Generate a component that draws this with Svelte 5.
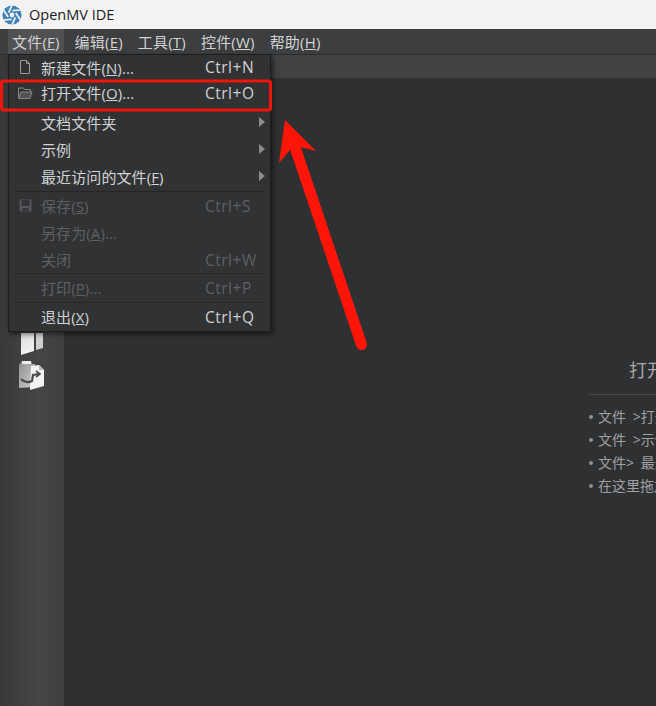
<script>
  const menubar = [
    { label: '文件', key: 'F', active: true },
    { label: '编辑', key: 'E' },
    { label: '工具', key: 'T' },
    { label: '控件', key: 'W' },
    { label: '帮助', key: 'H' }
  ];
  const groups = [
    [
      { label: '新建文件', key: 'N', dots: true, shortcut: 'Ctrl+N', icon: 'new', compact: true },
      { label: '打开文件', key: 'O', dots: true, shortcut: 'Ctrl+O', icon: 'open', spaced: true },
      { label: '文档文件夹', sub: true },
      { label: '示例', sub: true },
      { label: '最近访问的文件', key: 'F', sub: true }
    ],
    [
      { label: '保存', key: 'S', shortcut: 'Ctrl+S', icon: 'save', off: true },
      { label: '另存为', key: 'A', dots: true, off: true },
      { label: '关闭', shortcut: 'Ctrl+W', off: true }
    ],
    [{ label: '打印', key: 'P', dots: true, shortcut: 'Ctrl+P', off: true }],
    [{ label: '退出', key: 'X', shortcut: 'Ctrl+Q' }]
  ];
  const tips = ['文件 >打开文件', '文件 >示例', '文件> 最近访问的文件', '在这里拖放文件'];
</script>

<div class="window">
  <header class="titlebar">
    <svg class="logo" viewBox="0 0 20 20" width="20" height="20">
      <circle cx="10" cy="10" r="9.6" fill="#3f82b8" />
      <g fill="none" stroke="#f3f3f3" stroke-width="1.7">
        <path d="M10 .2 L6.6 7.6" />
        <path d="M18.6 5 L10.4 5.6" />
        <path d="M18.6 15 L13.8 8" />
        <path d="M10 19.8 L13.4 12.4" />
        <path d="M1.4 15 L9.6 14.4" />
        <path d="M1.4 5 L6.2 12" />
      </g>
      <circle cx="10" cy="10" r="2.4" fill="#f3f3f3" />
    </svg>
    <span class="title">OpenMV IDE</span>
  </header>

  <nav class="menubar">
    {#each menubar as m}
      <span class="top" class:active={m.active}>{m.label}(<u>{m.key}</u>)</span>
    {/each}
  </nav>

  <div class="body">
    <aside class="sidebar">
      <svg class="side-icon" viewBox="0 0 26 24" width="26" height="24">
        <defs>
          <linearGradient id="pg" x1="0" y1="0" x2="0.3" y2="1">
            <stop offset="0" stop-color="#d8d8d8" />
            <stop offset="1" stop-color="#f4f4f4" />
          </linearGradient>
          <linearGradient id="fold" x1="0" y1="0" x2="1" y2="1">
            <stop offset="0" stop-color="#8f8f8f" />
            <stop offset="1" stop-color="#d0d0d0" />
          </linearGradient>
        </defs>
        <polygon points="2,2 15,2 15,20 2,24" fill="url(#pg)" />
        <polygon points="17,2 24,2 24,17 17,19" fill="#cfcfcf" />
      </svg>
      <svg class="side-icon" viewBox="0 0 28 31" width="28" height="31">
        <polygon points="1,5 4,1 13,1 14,4 17,4 17,27 1,28" fill="url(#fold)" />
        <polygon points="4,1 13,1 13,4 4,4" fill="#efefef" />
        <polygon points="13,6 21,5 26,10 26,26 12,30" fill="#f4f4f4" />
        <polygon points="21,5 26,10 21,10" fill="#b5b5b5" />
        <path d="M3 19 Q8 24 14 21 L15 15 L21 14" fill="none" stroke="#4a4a4a" stroke-width="2.2" />
        <path d="M18 11 L22 14 L18 17" fill="none" stroke="#4a4a4a" stroke-width="1.6" />
      </svg>
    </aside>

    <main class="main">
      <div class="toolbar"></div>
      <section class="welcome">
        <h2>打开文件</h2>
        <ul>
          {#each tips as t}
            <li>{t}</li>
          {/each}
        </ul>
      </section>
    </main>
  </div>

  <div class="menu">
    {#each groups as g, gi}
      {#if gi > 0}<div class="sep s{gi}"></div>{/if}
      {#each g as item}
        <div class="item" class:off={item.off} class:compact={item.compact} class:spaced={item.spaced}>
          <span class="icon">
            {#if item.icon === 'new'}
              <svg viewBox="0 0 12 14" width="12" height="14">
                <path d="M1.5 .5 H7.5 L10.5 3.5 V13.5 H1.5 Z M7.5 .5 V3.5 H10.5" fill="none" stroke="#9a9b9c" />
              </svg>
            {:else if item.icon === 'open'}
              <svg viewBox="0 0 15 12" width="15" height="12">
                <path d="M.5 11 V1 H5.5 L6.5 2.5 H12.5 V4.5" fill="none" stroke="#87888a" />
                <path d="M.7 11.5 L2.8 5 H14 L12 11.5 Z" fill="#515254" stroke="#87888a" />
              </svg>
            {:else if item.icon === 'save'}
              <svg viewBox="0 0 13 13" width="13" height="13">
                <path d="M.5 .5 H12.5 V12.5 H.5 Z" fill="#56575a" />
                <rect x="2.5" y="1" width="8" height="6" fill="#34353a" />
                <rect x="3.5" y="9" width="6" height="3.5" fill="#34353a" />
              </svg>
            {/if}
          </span>
          <span class="text">
            {item.label}{#if item.key}(<u>{item.key}</u>){/if}{#if item.dots}...{/if}
          </span>
          {#if item.shortcut}<span class="shortcut">{item.shortcut}</span>{/if}
          {#if item.sub}<span class="arrow"></span>{/if}
        </div>
      {/each}
    {/each}
  </div>

  <svg class="annotation" viewBox="0 0 656 706" width="656" height="706">
    <rect x="1.5" y="81" width="269" height="29" rx="2" fill="none" stroke="#f0140a" stroke-width="3" />
    <line x1="296" y1="150" x2="361.5" y2="344.5" stroke="#ff1408" stroke-width="11" stroke-linecap="round" />
    <polygon points="285,120 316,151 300,147 290,150 279,163" fill="#ff1408" />
  </svg>
</div>

<style>
  :global(body) {
    margin: 0;
    background: #2f3032;
  }
  .window {
    position: relative;
    display: flex;
    flex-direction: column;
    width: 656px;
    height: 706px;
    overflow: hidden;
    font-family: "Open Sans", "Noto Sans CJK SC", sans-serif;
    font-size: 15px;
    color: #d2d3d4;
  }
  .titlebar {
    display: flex;
    align-items: center;
    gap: 7px;
    height: 29px;
    padding-left: 2px;
    background: #f3f3f3;
    flex: none;
  }
  .title {
    color: #1a1a1a;
    font-size: 14.5px;
  }
  .logo {
    flex: none;
  }
  .menubar {
    display: flex;
    align-items: stretch;
    gap: 7px;
    height: 25px;
    padding-left: 8px;
    background: #3d3e40;
    border-bottom: 1px solid #2c2d2e;
    flex: none;
    letter-spacing: 0.2px;
  }
  .top {
    display: flex;
    align-items: center;
    padding: 0 4px;
    white-space: pre;
  }
  .top.active {
    background: #505153;
  }
  .body {
    display: flex;
    flex: 1;
    min-height: 0;
  }
  .sidebar {
    display: flex;
    flex-direction: column;
    align-items: center;
    gap: 5px;
    width: 64px;
    padding-top: 276px;
    box-sizing: border-box;
    background: linear-gradient(90deg, #38393b, #444547 60%, #3f4042);
    flex: none;
  }
  .side-icon {
    flex: none;
  }
  .main {
    flex: 1;
    min-width: 0;
    display: flex;
    flex-direction: column;
    background: #2f3032;
  }
  .toolbar {
    height: 23px;
    background: #414244;
    flex: none;
  }
  .welcome {
    margin-left: 525px;
    padding-top: 279px;
    width: 300px;
    flex: none;
    color: #a0a1a2;
  }
  h2 {
    margin: 0;
    padding: 0 0 10px 40px;
    height: 27px;
    line-height: 26px;
    font-size: 18px;
    font-weight: 400;
    color: #a8a9aa;
    border-bottom: 1px solid #47484a;
  }
  ul {
    margin: 10px 0 0;
    padding: 0;
    list-style: none;
  }
  li {
    height: 23px;
    line-height: 23px;
    font-size: 14px;
    word-spacing: 3px;
    padding-left: 9px;
    position: relative;
    white-space: nowrap;
  }
  li::before {
    content: "";
    position: absolute;
    left: 0;
    top: 10px;
    width: 4px;
    height: 4px;
    border-radius: 50%;
    background: #8f9091;
  }
  .menu {
    position: absolute;
    left: 8px;
    top: 54px;
    width: 263px;
    height: 278px;
    box-sizing: border-box;
    background: #313234;
    border: 1px solid #1c1d1e;
    box-shadow: 2px 2px 5px rgba(0, 0, 0, 0.55);
    overflow: hidden;
  }
  .item {
    position: relative;
    display: flex;
    align-items: center;
    height: 27px;
    white-space: pre;
  }
  .item.compact {
    height: 24px;
  }
  .item.spaced {
    margin-bottom: 3px;
  }
  .item.off {
    color: #5f6062;
  }
  .icon {
    display: flex;
    align-items: center;
    justify-content: center;
    width: 32px;
    flex: none;
  }
  .text {
    flex: 1;
    letter-spacing: 0.1px;
  }
  .shortcut {
    position: absolute;
    left: 196px;
    font-size: 15.5px;
    letter-spacing: 0.5px;
  }
  .arrow {
    position: absolute;
    left: 250px;
    top: 8px;
    border-left: 6px solid #8b8c8d;
    border-top: 5px solid transparent;
    border-bottom: 5px solid transparent;
  }
  .sep {
    height: 1px;
    margin: 1px 5px 0;
    background: #242526;
  }
  .sep.s2 {
    margin: 0 5px;
  }
  .sep.s3 {
    margin: 1px 5px 0;
  }
  .annotation {
    position: absolute;
    left: 0;
    top: 0;
    pointer-events: none;
  }
</style>
